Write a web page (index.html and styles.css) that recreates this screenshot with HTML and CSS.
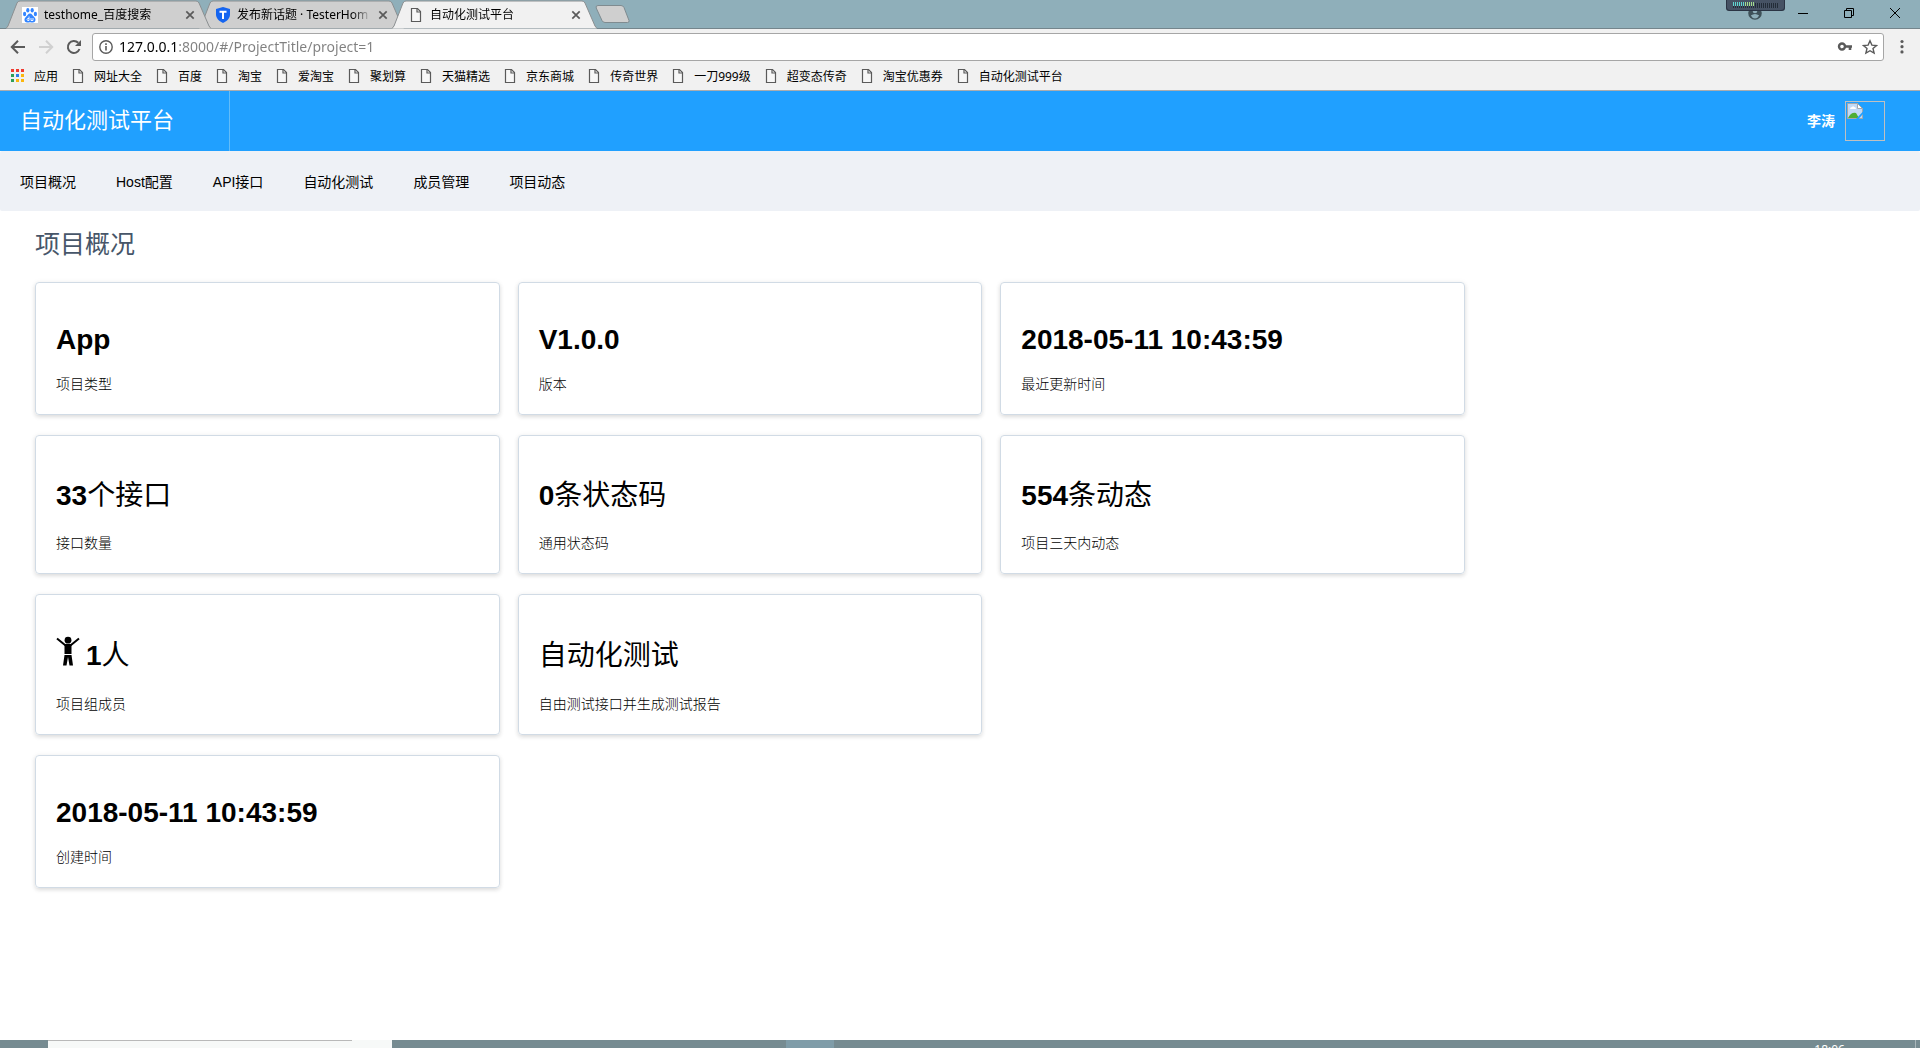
FILE: index.html
```html
<!DOCTYPE html>
<html lang="zh-CN">
<head>
<meta charset="utf-8">
<title>自动化测试平台</title>
<link rel="stylesheet" href="styles.css">
</head>
<body>
<svg class="defs" aria-hidden="true">
  <symbol id="doc" viewBox="0 0 16 16"><path d="M3.500 1.500h6l3 3v10h-9z" fill="#f7f7f7" stroke="#5a5a5a" stroke-width="1.200"/><path d="M9 1.500v3.500h3.500" fill="none" stroke="#5a5a5a" stroke-width="1.200"/></symbol>
  <symbol id="cross" viewBox="0 0 10 10"><path d="M1.300 1.300l7.400 7.400M8.700 1.300l-7.400 7.400" stroke="#5a5a5a" stroke-width="1.700"/></symbol>
  <symbol id="tab" viewBox="0 0 205 29"><path d="M0 28.500L2 26L11 3Q12 1 14 1H190Q192 1 193 3L203 26L205 28.500" stroke="#8b8f91"/></symbol>
</svg>

<header class="browser">
  <div class="tabstrip">
    <div class="tabs">
      <div class="tab tab-first">
        <svg class="tab-shape"><use href="#tab"/></svg>
        <svg class="icon16" viewBox="0 0 16 16"><rect width="16" height="16" fill="#fff"/><g fill="#3385ff"><ellipse cx="5.800" cy="3.200" rx="1.600" ry="2.300"/><ellipse cx="10.200" cy="3.200" rx="1.600" ry="2.300"/><ellipse cx="2.600" cy="7" rx="1.600" ry="2.200"/><ellipse cx="13.400" cy="7" rx="1.600" ry="2.200"/><path d="M8 6.500c2 0 2.500 2 4 3.300 2.600 2.300 1.500 5.700-1 5.700-1.200 0-2-.3-3-.3s-1.800.3-3 .3c-2.500 0-3.600-3.400-1-5.700C5.500 8.500 6 6.500 8 6.500z"/></g><path d="M7 9.500v4H5.600q-1-.9 0-2H7M9 11v2.500h2V11" fill="none" stroke="#fff" stroke-width=".9"/></svg>
        <span class="tab-title">testhome_百度搜索</span>
        <button class="tab-close" aria-label="关闭标签页"><svg><use href="#cross"/></svg></button>
      </div>
      <div class="tab tab-second">
        <svg class="tab-shape"><use href="#tab"/></svg>
        <svg class="icon16" viewBox="0 0 16 16"><path d="M8 0l7 2v5.500c0 4-3.500 7-7 8.500-3.500-1.500-7-4.500-7-8.500V2z" fill="#1565f0"/><path d="M4.500 4.800h7M8 4.800V12" stroke="#fff" stroke-width="2"/></svg>
        <span class="tab-title">发布新话题 · TesterHom</span>
        <button class="tab-close" aria-label="关闭标签页"><svg><use href="#cross"/></svg></button>
      </div>
      <div class="tab tab-active">
        <svg class="tab-shape"><use href="#tab"/></svg>
        <svg class="icon16"><use href="#doc"/></svg>
        <span class="tab-title">自动化测试平台</span>
        <button class="tab-close" aria-label="关闭标签页"><svg><use href="#cross"/></svg></button>
      </div>
      <button class="new-tab" aria-label="新标签页"><svg viewBox="0 0 35 18"><path d="M3 .5h23q2 0 3 2l5 13q.5 2-1.500 2H10q-2 0-3-2L1.200 3Q.5.5 3 .5z" fill="#cfcfcf" stroke="#7f8b90"/></svg></button>
    </div>
    <div class="window-controls">
      <button aria-label="用户" class="profile"><svg viewBox="0 0 14 14"><circle cx="7" cy="7" r="6.800" fill="#3f5159"/><circle cx="7" cy="5" r="2.300" fill="#8fafba"/><path d="M2.800 9.500q4.200-3 8.400 0-1.500 3-4.200 3t-4.200-3z" fill="#8fafba"/></svg></button>
      <button aria-label="最小化"><svg viewBox="0 0 10 10"><path d="M0 5.500h10" stroke="#000"/></svg></button>
      <button aria-label="还原"><svg viewBox="0 0 10 10"><path d="M.5 2.500h7v7h-7zM2.500 2.500v-2h7v7h-2" fill="none" stroke="#000"/></svg></button>
      <button aria-label="关闭"><svg viewBox="0 0 10 10"><path d="M0 0l10 10M10 0L0 10" stroke="#000"/></svg></button>
      <svg class="meter" viewBox="0 0 59 11"><path d="M0 0h59v8q0 3-3 3H3q-3 0-3-3z" fill="#2b3444"/><path d="M1 0h57v7q0 3-3 3H4q-3 0-3-3z" fill="#465264"/><path d="M7 5.500h45" stroke="#232c38" stroke-width="5" stroke-dasharray="1 1"/><path d="M7 4h11" stroke="#5fd6d0" stroke-width="4" stroke-dasharray="1 1"/><path d="M19 4h10" stroke="#a4dc8c" stroke-width="4" stroke-dasharray="1 1"/></svg>
    </div>
  </div>

  <div class="toolbar">
    <button aria-label="后退"><svg viewBox="0 0 16 16"><path d="M15 8H2M8 1.800L1.800 8 8 14.200" fill="none" stroke="#5a5a5a" stroke-width="2"/></svg></button>
    <button aria-label="前进"><svg viewBox="0 0 16 16"><path d="M1 8h13M8 1.800L14.200 8 8 14.200" fill="none" stroke="#d0d0d0" stroke-width="2"/></svg></button>
    <button aria-label="重新加载"><svg viewBox="0 0 16 16"><path d="M13.500 10A6 6 0 1 1 12.200 3.800" fill="none" stroke="#5a5a5a" stroke-width="2"/><path d="M15 1v6H9z" fill="#5a5a5a"/></svg></button>
    <div class="omnibox">
      <svg class="icon14" viewBox="0 0 14 14"><circle cx="7" cy="7" r="6.200" fill="none" stroke="#5a5a5a" stroke-width="1.400"/><path d="M7 6v4.500M7 3.300v1.600" stroke="#5a5a5a" stroke-width="1.600"/></svg>
      <input class="url" type="text" aria-label="地址" value="127.0.0.1:8000/#/ProjectTitle/project=1">
      <button aria-label="密码"><svg viewBox="0 0 16 16"><circle cx="5" cy="7.500" r="3" fill="none" stroke="#5a5a5a" stroke-width="2.400"/><path d="M8 7.500h7M13 7.500V11" fill="none" stroke="#5a5a5a" stroke-width="2.600"/></svg></button>
      <button aria-label="收藏"><svg viewBox="0 0 16 16"><path d="M8 1.800l1.900 4.300 4.600.4-3.500 3 1.100 4.600L8 11.700l-4.100 2.400L5 9.500l-3.500-3 4.600-.4z" fill="none" stroke="#5a5a5a" stroke-width="1.400"/></svg></button>
    </div>
    <button class="menu-button" aria-label="菜单"><svg viewBox="0 0 16 16" fill="#5a5a5a"><circle cx="8" cy="2.500" r="1.600"/><circle cx="8" cy="7.700" r="1.600"/><circle cx="8" cy="12.900" r="1.600"/></svg></button>
  </div>

  <nav class="bookmarks" aria-label="书签">
    <a href="#"><svg class="icon16" viewBox="1 0 16 16"><path d="M2 1h3v3H2zM7 1h3v3H7zM12 1h3v3h-3z" fill="#f03a30"/><path d="M2 6h3v3H2zM2 11h3v3H2z" fill="#2e9e58"/><path d="M7 6h3v3H7z" fill="#2f7de8"/><path d="M12 6h3v3h-3zM7 11h3v3H7zM12 11h3v3h-3z" fill="#fbb60c"/></svg>应用</a>
    <a href="#"><svg class="icon16"><use href="#doc"/></svg>网址大全</a>
    <a href="#"><svg class="icon16"><use href="#doc"/></svg>百度</a>
    <a href="#"><svg class="icon16"><use href="#doc"/></svg>淘宝</a>
    <a href="#"><svg class="icon16"><use href="#doc"/></svg>爱淘宝</a>
    <a href="#"><svg class="icon16"><use href="#doc"/></svg>聚划算</a>
    <a href="#"><svg class="icon16"><use href="#doc"/></svg>天猫精选</a>
    <a href="#"><svg class="icon16"><use href="#doc"/></svg>京东商城</a>
    <a href="#"><svg class="icon16"><use href="#doc"/></svg>传奇世界</a>
    <a href="#"><svg class="icon16"><use href="#doc"/></svg>一刀999级</a>
    <a href="#"><svg class="icon16"><use href="#doc"/></svg>超变态传奇</a>
    <a href="#"><svg class="icon16"><use href="#doc"/></svg>淘宝优惠券</a>
    <a href="#"><svg class="icon16"><use href="#doc"/></svg>自动化测试平台</a>
  </nav>
</header>

<div class="app">
  <header class="app-header">
    <a class="logo" href="#">自动化测试平台</a>
    <div class="user">
      <span class="user-name">李涛</span>
      <div class="avatar"><svg viewBox="0 0 16 16"><path d="M.5.500h10l5 5v10H.5z" fill="#c3d9f5" stroke="#a3a8ad"/><path d="M10.500.500v5h5z" fill="#fff" stroke="#a3a8ad"/><path d="M3 6q.3-2 2-2 1-1.500 2.300 0Q9 4.200 9 6z" fill="#fff"/><path d="M1 15q3-6 8-5l3 5z" fill="#4fae33"/><path d="M9 16l7-7.500v2.500l-4.500 5z" fill="#20a0ff"/></svg></div>
    </div>
  </header>
  <nav class="app-nav">
    <a href="#">项目概况</a>
    <a href="#">Host配置</a>
    <a href="#">API接口</a>
    <a href="#">自动化测试</a>
    <a href="#">成员管理</a>
    <a href="#">项目动态</a>
  </nav>
  <main class="content">
    <h1 class="page-title">项目概况</h1>
    <div class="cards">
      <section class="card"><h2>App</h2><p>项目类型</p></section>
      <section class="card"><h2>V1.0.0</h2><p>版本</p></section>
      <section class="card"><h2>2018-05-11 10:43:59</h2><p>最近更新时间</p></section>
      <section class="card card-mixed"><h2>33<span>个接口</span></h2><p>接口数量</p></section>
      <section class="card card-mixed"><h2>0<span>条状态码</span></h2><p>通用状态码</p></section>
      <section class="card card-mixed"><h2>554<span>条动态</span></h2><p>项目三天内动态</p></section>
      <section class="card card-members"><h2><svg class="person" viewBox="0 0 24 30"><circle cx="12" cy="4.200" r="3.400"/><path d="M1 2.500l8 6.500h6l8-6.500" fill="none" stroke="#000" stroke-width="2"/><path d="M8.500 8.500h7V18h-7zM8.500 19h7l1.500 10.500h-3.500L12 21l-1.500 8.500H7z"/></svg>1<span>人</span></h2><p>项目组成员</p></section>
      <section class="card card-members"><h2><span>自动化测试</span></h2><p>自由测试接口并生成测试报告</p></section>
      <section class="card card-newrow"><h2>2018-05-11 10:43:59</h2><p>创建时间</p></section>
    </div>
  </main>
</div>

<footer class="taskbar">
  <div class="task-search"><div class="task-search-field"></div></div>
  <div class="task-active"></div>
  <time class="clock">18:06</time>
  <div class="show-desktop"></div>
</footer>
</body>
</html>
```
FILE: styles.css
```css
* { box-sizing: border-box; }

body {
  margin: 0;
  min-height: 100vh;
  display: flex;
  flex-direction: column;
  background: #fff;
  color: #000;
  font-family: "Liberation Sans", "Noto Sans CJK SC", sans-serif;
  font-size: 14px;
}

button {
  padding: 0;
  border: 0;
  background: none;
  display: flex;
  align-items: center;
  justify-content: center;
}

a { color: inherit; text-decoration: none; }
svg { display: block; flex: none; }
.defs { position: absolute; width: 0; height: 0; }
.icon16 { width: 16px; height: 16px; }
.icon14 { width: 14px; height: 14px; }

/* Browser chrome */
.browser {
  font-family: "Noto Sans", "Noto Sans CJK SC", sans-serif;
  font-size: 12px;
  background: #f1f1f1;
  border-bottom: 1px solid #aaacae;
}

.tabstrip {
  display: flex;
  justify-content: space-between;
  height: 29px;
  background: #8fafba;
  border-bottom: 1px solid #74858c;
}

.tabs { display: flex; padding-left: 6px; }

.tab {
  position: relative;
  display: flex;
  align-items: center;
  width: 205px;
  height: 29px;
  margin-right: -12px;
  padding: 0 12px 0 16px;
}

.tab-first { z-index: 2; }
.tab-second { z-index: 1; }
.tab-active { z-index: 3; }

.tab-shape {
  position: absolute;
  inset: 0;
  z-index: -1;
  width: 205px;
  height: 29px;
  fill: #cfcfcf;
}

.tab-active .tab-shape { fill: #f1f1f1; }

.tab-title {
  flex: 1;
  margin-left: 6px;
  overflow: hidden;
  white-space: nowrap;
  line-height: 16px;
  mask-image: linear-gradient(to left, transparent, #000 20px);
}

.tab-close { width: 18px; height: 18px; margin-left: 2px; }
.tab-close svg { width: 10px; height: 10px; }

.new-tab { width: 35px; margin-left: 10px; }
.new-tab svg { width: 35px; height: 18px; }

.window-controls {
  position: relative;
  display: flex;
  align-items: center;
  height: 26px;
  padding-right: 2px;
}

.window-controls button { width: 46px; height: 26px; }
.window-controls button svg { width: 10px; height: 10px; }
.window-controls .profile { width: 50px; }
.window-controls .profile svg { width: 14px; height: 14px; }

.window-controls .meter {
  position: absolute;
  top: 0;
  right: 135px;
  width: 59px;
  height: 11px;
}

.toolbar {
  display: flex;
  align-items: center;
  height: 36px;
  padding: 0 8px 0 10px;
}

.toolbar > button { width: 16px; height: 28px; margin-right: 12px; }
.toolbar button svg { width: 16px; height: 16px; }
.toolbar .menu-button { margin: 0 2px 0 10px; }

.omnibox {
  flex: 1;
  display: flex;
  align-items: center;
  gap: 9px;
  height: 28px;
  margin-left: -2px;
  padding: 0 5px 0 6px;
  background: #fff;
  border: 1px solid #a6a6a6;
  border-radius: 3px;
}

.url {
  flex: 1;
  min-width: 0;
  height: 24px;
  margin-left: -3px;
  padding: 0;
  border: 0;
  outline: 0;
  font: 14px/24px "Noto Sans", sans-serif;
  color: #808080;
  /* The host part is black, the rest of the address grey */
  background: linear-gradient(to right, #000 59px, #808080 59px) text;
  -webkit-text-fill-color: transparent;
}

.bookmarks {
  display: flex;
  gap: 12px;
  height: 25px;
  padding-left: 10px;
}

.bookmarks a {
  display: flex;
  align-items: center;
  gap: 8px;
  height: 22px;
  white-space: nowrap;
}

/* Application */
.app { flex: 1; }

.app-header {
  display: flex;
  justify-content: space-between;
  height: 60px;
  padding-right: 35px;
  background: #20a0ff;
  color: #fff;
}

.logo {
  width: 230px;
  padding-left: 20px;
  border-right: 1px solid #62bcf9;
  font-size: 22px;
  line-height: 60px;
}

.user {
  display: flex;
  align-items: center;
  gap: 10px;
}

.user-name { padding-bottom: 2px; font-weight: 700; }

.avatar {
  width: 40px;
  height: 40px;
  padding: 1px;
  border: 1px solid #c0c0c0;
}

.avatar svg { width: 16px; height: 16px; }

.app-nav {
  display: flex;
  height: 60px;
  background: #eef1f6;
  border-radius: 2px;
}

.app-nav a { padding: 0 20px; line-height: 62px; }

.content { padding: 16px 35px 40px; }

.page-title {
  margin: 0 0 20px;
  color: #475669;
  font-size: 25px;
  font-weight: 400;
  line-height: 35px;
}

.cards {
  display: grid;
  grid-template-columns: repeat(3, minmax(0, 1fr));
  align-items: start;
  gap: 20px 18px;
  max-width: 1430px;
}

.card {
  padding: 20px 20px 19px;
  border: 1px solid #d1dbe5;
  border-radius: 4px;
  box-shadow: 0 2px 4px rgba(0, 0, 0, .12), 0 0 6px rgba(0, 0, 0, .04);
}

.card h2 {
  margin: 21px 0 18px;
  font-size: 28px;
  font-weight: 700;
  line-height: 32px;
}

.card h2 span { font-weight: 400; }
.card p { margin: 0; line-height: 21px; font-weight: 300; }
.card-mixed h2 { line-height: 38px; }
.card-members h2 { display: flex; line-height: 40px; }
.person { width: 24px; height: 30px; margin-right: 6px; }
.card-newrow { grid-column: 1; }

/* Desktop taskbar, cut off by the bottom of the screen */
.taskbar {
  display: flex;
  height: 8px;
  overflow: hidden;
  background: #768b91;
}

.task-search { width: 344px; margin-left: 48px; background: #f7f9f8; }
.task-search-field { width: 304px; height: 1px; background: #b9b9b9; }
.task-active { width: 48px; margin-left: 394px; background: #7f9ca8; }

.clock {
  margin-left: auto;
  padding-top: 2px;
  color: #fff;
  font: 12px/16px "Noto Sans", sans-serif;
}

.show-desktop { width: 5px; margin-left: 70px; border-left: 1px solid #a9b6ba; }
```
